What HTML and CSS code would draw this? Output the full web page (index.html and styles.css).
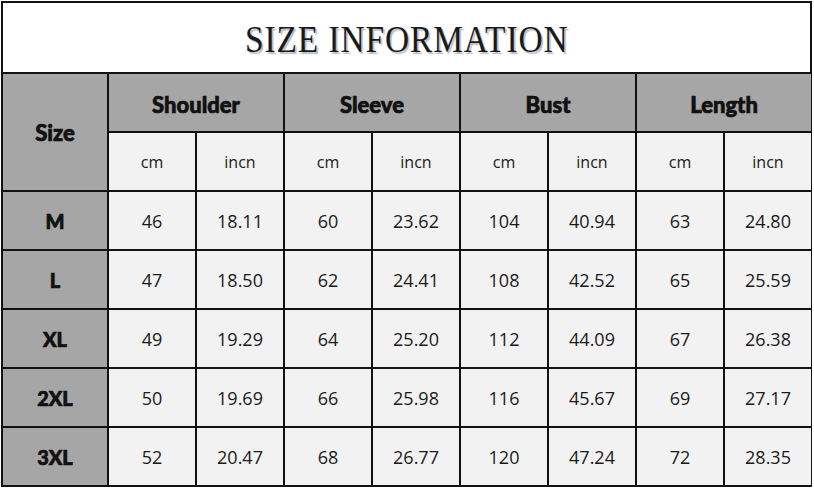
FILE: index.html
```html
<!DOCTYPE html>
<html>
<head>
<meta charset="utf-8">
<link rel="stylesheet" href="styles.css">
</head>
<body>
<div class="chart">
  <div class="title"><span class="title-text">SIZE INFORMATION</span></div>
  <div class="grid">
    <div class="cell head size-head">Size</div>
    <div class="cell head span2">Shoulder</div>
    <div class="cell head span2">Sleeve</div>
    <div class="cell head span2">Bust</div>
    <div class="cell head span2">Length</div>
    <div class="cell unit">cm</div><div class="cell unit">incn</div>
    <div class="cell unit">cm</div><div class="cell unit">incn</div>
    <div class="cell unit">cm</div><div class="cell unit">incn</div>
    <div class="cell unit">cm</div><div class="cell unit">incn</div>

    <div class="cell label">M</div>
    <div class="cell">46</div><div class="cell">18.11</div><div class="cell">60</div><div class="cell">23.62</div><div class="cell">104</div><div class="cell">40.94</div><div class="cell">63</div><div class="cell">24.80</div>

    <div class="cell label">L</div>
    <div class="cell">47</div><div class="cell">18.50</div><div class="cell">62</div><div class="cell">24.41</div><div class="cell">108</div><div class="cell">42.52</div><div class="cell">65</div><div class="cell">25.59</div>

    <div class="cell label">XL</div>
    <div class="cell">49</div><div class="cell">19.29</div><div class="cell">64</div><div class="cell">25.20</div><div class="cell">112</div><div class="cell">44.09</div><div class="cell">67</div><div class="cell">26.38</div>

    <div class="cell label">2XL</div>
    <div class="cell">50</div><div class="cell">19.69</div><div class="cell">66</div><div class="cell">25.98</div><div class="cell">116</div><div class="cell">45.67</div><div class="cell">69</div><div class="cell">27.17</div>

    <div class="cell label">3XL</div>
    <div class="cell">52</div><div class="cell">20.47</div><div class="cell">68</div><div class="cell">26.77</div><div class="cell">120</div><div class="cell">47.24</div><div class="cell">72</div><div class="cell">28.35</div>
  </div>
</div>
</body>
</html>
```
FILE: styles.css
```css
html, body {
  margin: 0;
  padding: 0;
  background: #ffffff;
}
.chart {
  margin: 1px 0 0 1px;
  width: 807px;
  border: 2px solid #111;
  background: #111;
}
.title {
  height: 69px;
  background: #ffffff;
  border-bottom: 2px solid #111;
  display: flex;
  align-items: center;
  justify-content: center;
}
.title-text {
  font-family: "Liberation Serif", serif;
  font-size: 38px;
  color: #1a1a1a;
  display: inline-block;
  transform: scaleX(0.88);
  letter-spacing: 1px;
  text-shadow: 2px 2px 1px #b8bcc4;
  padding-top: 2px;
}
.grid {
  display: grid;
  grid-template-columns: 104px repeat(8, 86px);
  grid-template-rows: repeat(7, 57px);
  gap: 2px;
  background: #111;
}
.cell {
  background: #f2f2f2;
  display: flex;
  align-items: center;
  justify-content: center;
  font-family: "Open Sans", sans-serif;
  font-size: 18px;
  color: #1a1a1a;
}
.head {
  background: #a6a6a6;
  font-family: Lato, sans-serif;
  font-weight: 900;
  font-size: 22px;
  color: #111;
  -webkit-text-stroke: 0.7px #111;
  padding-top: 3px;
}
.span2 {
  grid-column: span 2;
}
.size-head {
  grid-row: span 2;
  font-size: 22px;
  padding-top: 0;
}
.unit {
  font-size: 16px;
}
.label {
  background: #a6a6a6;
  font-family: Lato, sans-serif;
  font-weight: 900;
  font-size: 20px;
  color: #111;
  -webkit-text-stroke: 0.7px #111;
}
```
